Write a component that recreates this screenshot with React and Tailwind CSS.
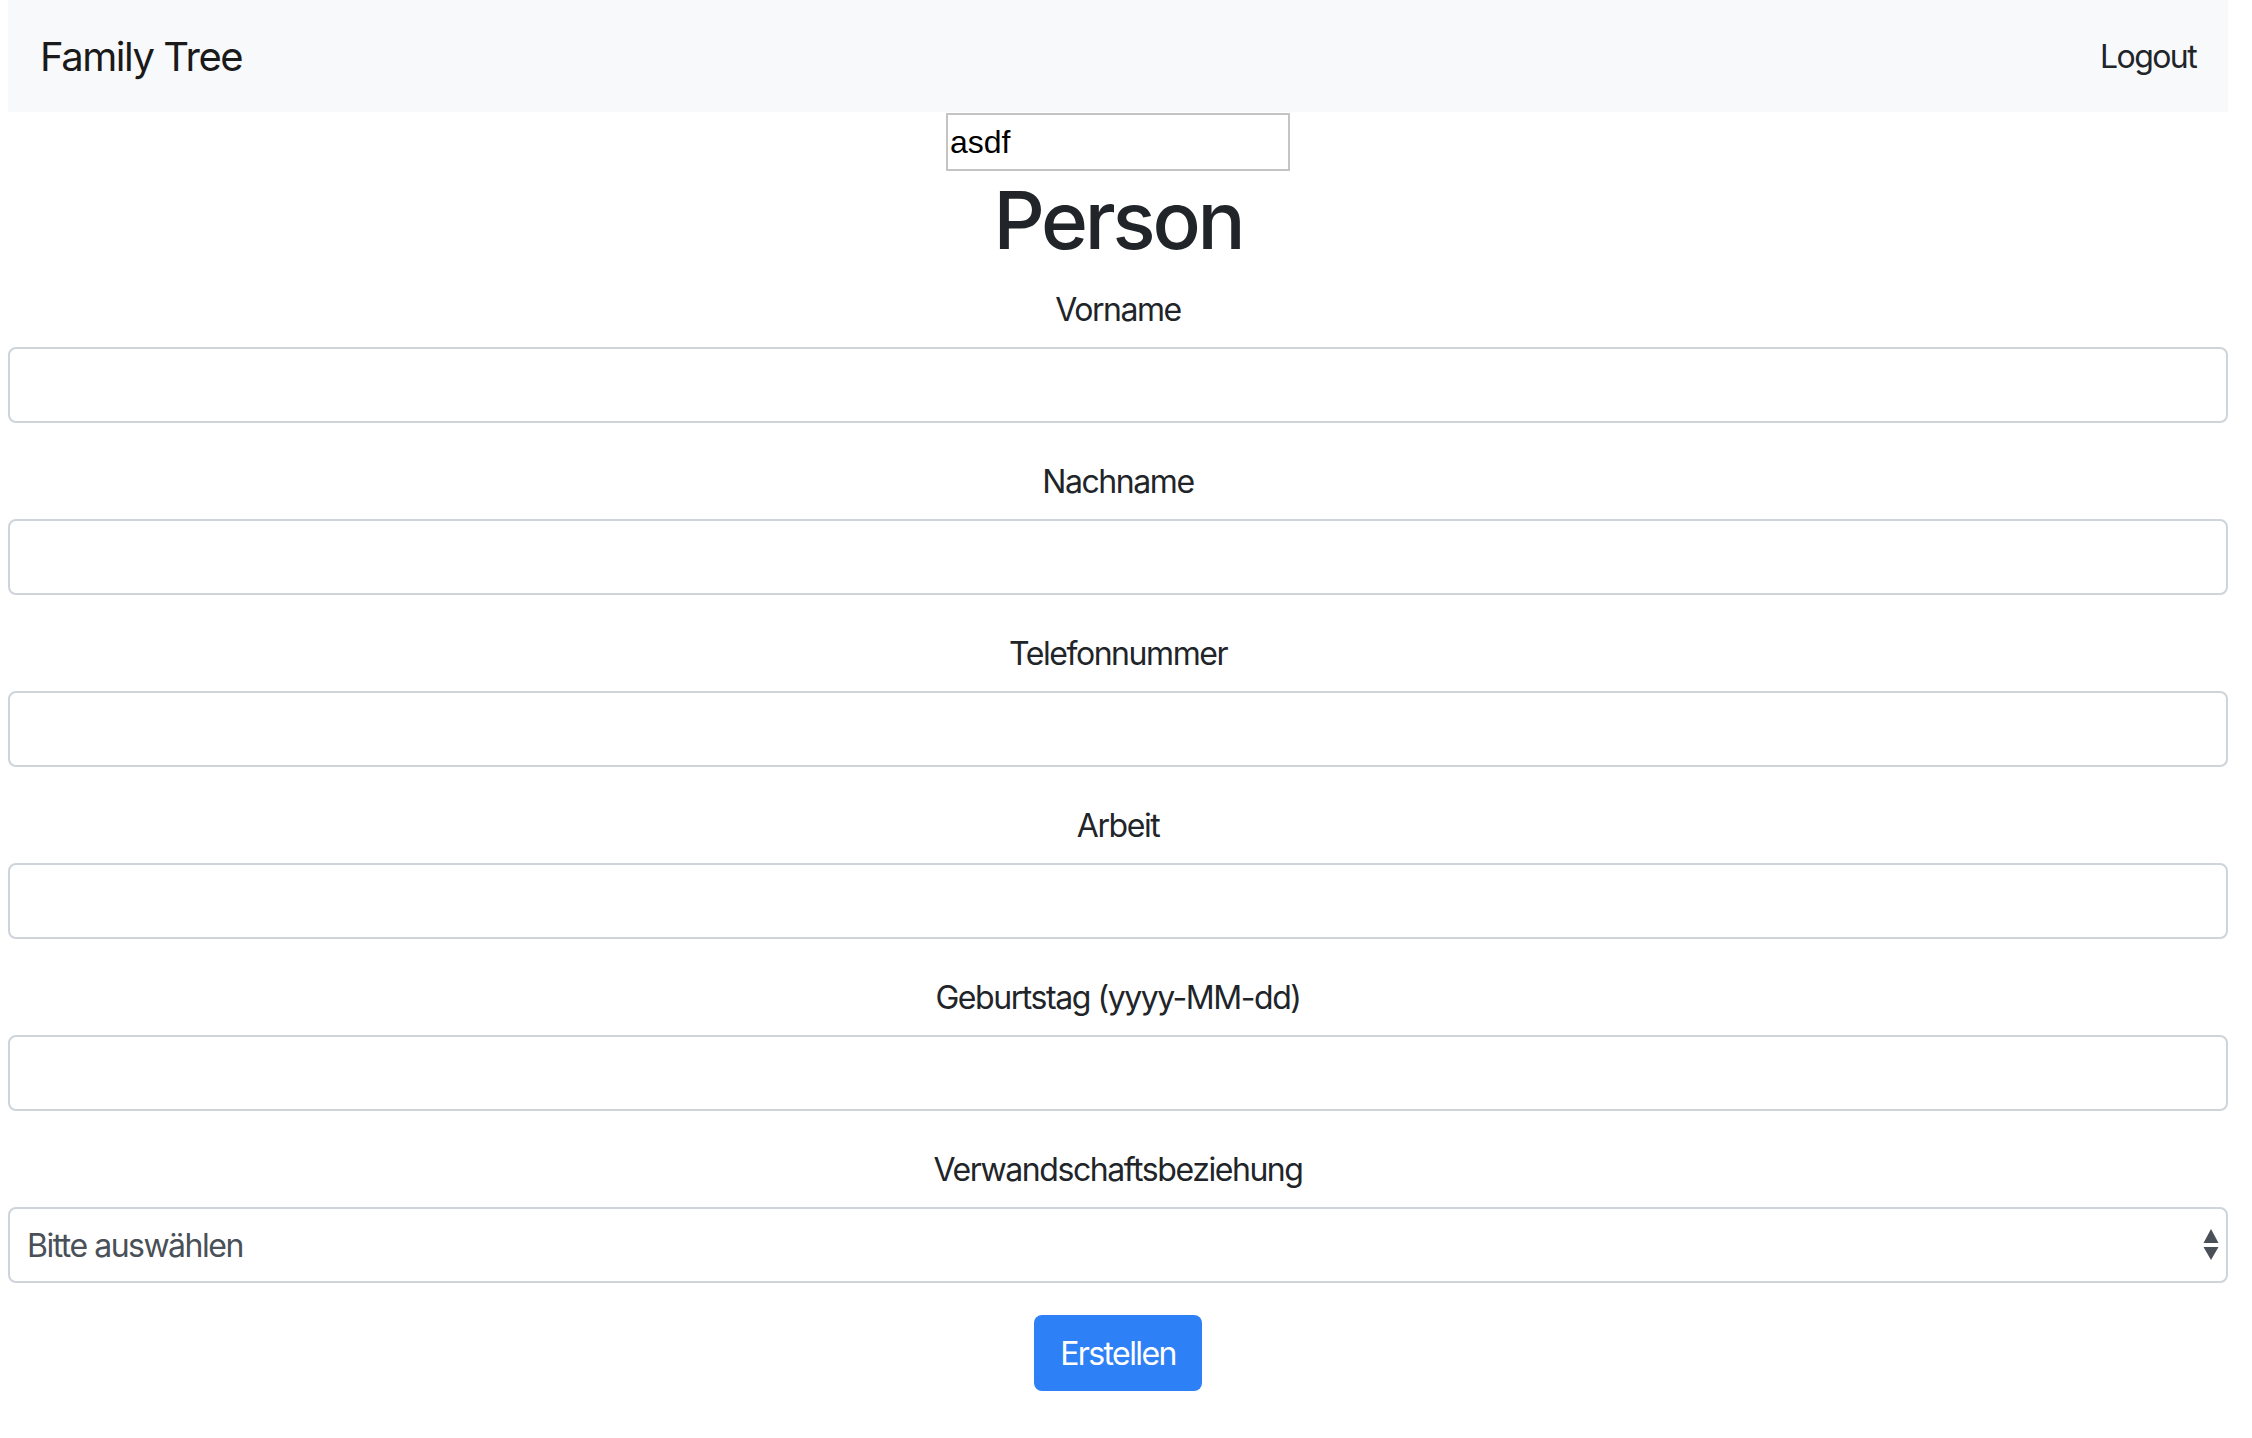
const fields = [
  "Vorname",
  "Nachname",
  "Telefonnummer",
  "Arbeit",
  "Geburtstag (yyyy-MM-dd)",
];

function SelectArrows() {
  return (
    <svg
      width="16"
      height="32"
      viewBox="0 0 16 32"
      className="pointer-events-none absolute right-[7px] top-1/2 -translate-y-1/2"
    >
      <path d="M8 0 L15.5 14 L0.5 14 Z" fill="#495057" />
      <path d="M0.5 18 L15.5 18 L8 31 Z" fill="#495057" />
    </svg>
  );
}

export default function App() {
  return (
    <div
      className="ml-2 mr-6 bg-white text-[#212529]"
      style={{ fontFamily: "Inter, 'Noto Sans', sans-serif" }}
    >
      <nav className="flex h-[112px] items-center justify-between bg-[#f8f9fa] px-8">
        <span className="pt-[2px] text-[40px] leading-[60px] tracking-[-0.036em] text-[#1a1a1a]">
          Family Tree
        </span>
        <span className="pt-[2px] text-[32px] leading-[48px] tracking-[-0.05em] text-[#212529]">
          Logout
        </span>
      </nav>

      <div className="flex flex-col items-center">
        <input
          defaultValue="asdf"
          className="mt-[1px] h-[58px] w-[344px] border-2 border-[#c4c4c4] px-[2px] text-[32px] text-black outline-none"
          style={{ fontFamily: "'Liberation Sans', Arial, sans-serif" }}
        />
        <h1 className="mb-4 pt-[2px] text-[80px] leading-[94px] font-medium tracking-[-0.04em] text-[#212529]">
          Person
        </h1>
      </div>

      <form className="w-full">
        {fields.map((label) => (
          <div key={label} className="mb-8">
            <label className="mb-[13px] block pt-[3px] text-center text-[32px] leading-[48px] tracking-[-0.045em]">
              {label}
            </label>
            <input
              type="text"
              className="block h-[76px] w-full rounded-[8px] border-2 border-[#ced4da] bg-white px-6 text-[32px] outline-none"
            />
          </div>
        ))}

        <div className="mb-8">
          <label className="mb-[13px] block pt-[3px] text-center text-[32px] leading-[48px] tracking-[-0.045em]">
            Verwandschaftsbeziehung
          </label>
          <div className="relative h-[76px] w-full rounded-[8px] border-2 border-[#ced4da] bg-white">
            <div className="flex h-full items-center pl-[17px] pt-[2px] text-[32px] tracking-[-0.047em] text-[#495057]">
              Bitte auswählen
            </div>
            <SelectArrows />
          </div>
        </div>

        <div className="flex justify-center">
          <button
            type="button"
            className="h-[76px] w-[168px] rounded-[8px] bg-[#2e80f6] pt-[2px] text-[32px] tracking-[-0.05em] text-white"
          >
            Erstellen
          </button>
        </div>
      </form>
    </div>
  );
}
